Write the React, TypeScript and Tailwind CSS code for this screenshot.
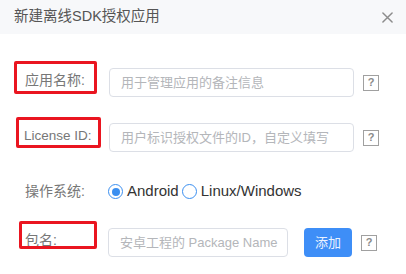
import React from 'react';

const font = { fontFamily: '"Liberation Sans", "Noto Sans CJK SC", sans-serif' };

function HelpBox() {
  return (
    <span className="ml-[9px] flex h-[16px] w-[16px] items-center justify-center border border-[#a0a0a0] text-[11px] font-bold leading-none text-[#8a8a8a]">
      ?
    </span>
  );
}

function Radio({ checked, label }: { checked?: boolean; label: string }) {
  return (
    <label className="flex items-center">
      <span className="flex h-[15px] w-[15px] items-center justify-center rounded-full border-[1.5px] border-[#3b8ff0] bg-white">
        {checked && <span className="h-[8px] w-[8px] rounded-full bg-[#3b8ff0]" />}
      </span>
      <span className="ml-[4px] text-[15px] text-[#333]">{label}</span>
    </label>
  );
}

export default function App() {
  return (
    <div className="h-[274px] w-[406px] overflow-hidden bg-white" style={font}>
      {/* 헤더 */}
      <div className="flex h-[34px] items-center justify-between bg-[#f7f8fa] pl-[14px] pr-[13px]">
        <h2 className="text-[14.5px] text-[#555]">新建离线SDK授权应用</h2>
        <svg width="11" height="11" viewBox="0 0 12 12" className="text-[#8c8c8c]">
          <path d="M1 1L11 11M11 1L1 11" stroke="currentColor" strokeWidth="1.6" strokeLinecap="round" />
        </svg>
      </div>

      <div className="flex flex-col">
        {/* 应用名称 */}
        <div className="relative mt-[34px] flex h-[29px] items-center">
          <div className="absolute left-[14px] top-[-7px] h-[33px] w-[83px] rounded-[2px] border-[3px] border-[#ea1520]" />
          <span className="w-[109px] pl-[25px] pb-[4px] text-[14px] text-[#777]">应用名称:</span>
          <div className="flex h-[29px] w-[245px] items-center whitespace-nowrap rounded-[4px] border border-[#dcdfe6] px-[11px] text-[13px] text-[#b4b6ba]">
            用于管理应用的备注信息
          </div>
          <HelpBox />
        </div>

        {/* License ID */}
        <div className="relative mt-[26px] flex h-[29px] items-center">
          <div className="absolute left-[16px] top-[-6px] h-[31px] w-[85px] rounded-[2px] border-[3px] border-[#ea1520]" />
          <span className="w-[109px] whitespace-nowrap pl-[24px] pb-[2px] text-[13.5px] text-[#777]">License ID:</span>
          <div className="flex h-[29px] w-[245px] items-center whitespace-nowrap rounded-[4px] border border-[#dcdfe6] px-[11px] text-[13px] text-[#b4b6ba]">
            用户标识授权文件的ID，自定义填写
          </div>
          <HelpBox />
        </div>

        {/* 操作系统 */}
        <div className="mt-[25px] flex h-[29px] items-center">
          <span className="w-[108px] pl-[25px] text-[14px] text-[#777]">操作系统:</span>
          <div className="flex items-center gap-[3px]">
            <Radio checked label="Android" />
            <Radio label="Linux/Windows" />
          </div>
        </div>

        {/* 包名 */}
        <div className="relative mt-[22px] flex h-[29px] items-center">
          <div className="absolute left-[19px] top-[-7px] h-[28px] w-[78px] rounded-[2px] border-[3px] border-[#ea1520]" />
          <span className="w-[108px] pl-[25px] pb-[4px] text-[14px] text-[#777]">包名:</span>
          <div className="flex h-[29px] w-[180px] items-center overflow-hidden whitespace-nowrap rounded-[4px] border border-[#dcdfe6] px-[11px] text-[13px] text-[#b4b6ba]">
            安卓工程的 Package Name
          </div>
          <button className="ml-[16px] flex h-[29px] w-[48px] items-center justify-center rounded-[4px] bg-[#3e8ef7] text-[13px] text-[#eaf2ff]">
            添加
          </button>
          <HelpBox />
        </div>
      </div>
    </div>
  );
}
